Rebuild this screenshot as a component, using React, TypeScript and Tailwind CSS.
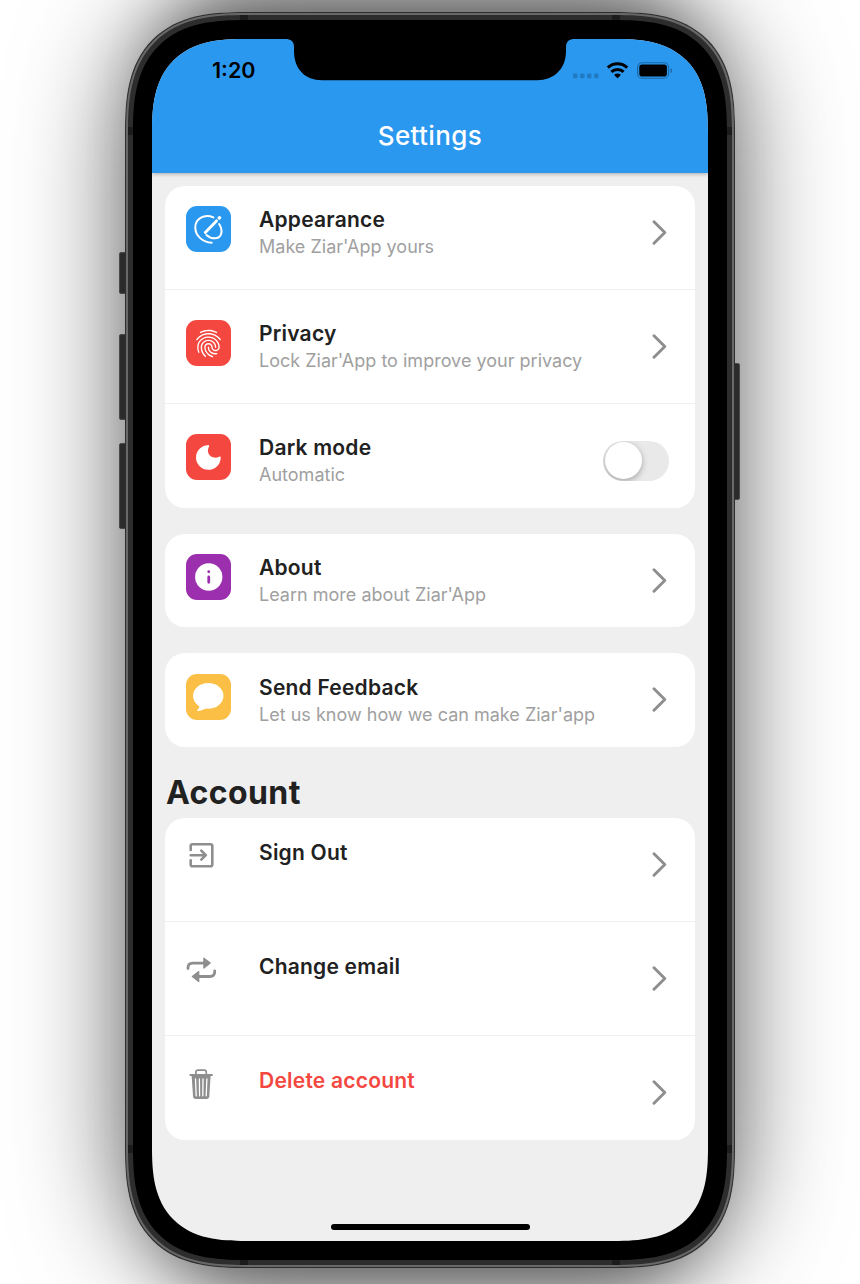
import type { ReactNode } from "react";
import { MdFingerprint } from "react-icons/md";

const squircle = "[corner-shape:superellipse(1.42)]";

function Chevron() {
  return (
    <svg className="h-[25px] w-[15px]" viewBox="0 0 15 25" fill="none" stroke="#8e8e8e" strokeWidth="2.9" strokeLinecap="round" strokeLinejoin="round">
      <path d="M2 1.8 12.800 12.500 2 23.200" />
    </svg>
  );
}

function Tile({ color, children }: { color: string; children: ReactNode }) {
  return <div className={`flex h-[46px] w-[45.5px] items-center justify-center rounded-[11px] text-white ${color}`}>{children}</div>;
}

type RowProps = {
  icon: ReactNode;
  title: string;
  subtitle?: string;
  danger?: boolean;
  trailing?: ReactNode;
  className: string;
};

function Row({ icon, title, subtitle, danger, trailing, className }: RowProps) {
  return (
    <div className={`flex pr-[28.5px] pl-[20.5px] ${className}`}>
      <div className="w-[73.5px]">{icon}</div>
      <div className="flex-1 whitespace-nowrap">
        <div className={`text-[21px] leading-[27px] font-semibold tracking-[0.22px] ${danger ? "text-[#f4473f]" : "text-[#212121]"}`}>{title}</div>
        {subtitle && <div className="text-[18px] leading-[27px] tracking-[0.01px] text-[#a0a0a0]">{subtitle}</div>}
      </div>
      <div className="pt-[13.5px]">{trailing ?? <Chevron />}</div>
    </div>
  );
}

function Card({ children, className = "" }: { children: ReactNode; className?: string }) {
  return <section className={`overflow-hidden rounded-[20px] bg-white ${className}`}>{children}</section>;
}

function Divider() {
  return <div className="h-px bg-[#f0f0f0]" />;
}

function StatusIcons() {
  return (
    <svg className="h-[18px] w-[102px]" viewBox="0 0 102 18">
      <g fill="#217bc2">
        <rect x="1" y="11.6" width="4.6" height="4.6" rx="1.3" />
        <rect x="8" y="11.6" width="4.6" height="4.6" rx="1.3" />
        <rect x="15" y="11.6" width="4.6" height="4.6" rx="1.3" />
        <rect x="22" y="11.6" width="4.6" height="4.6" rx="1.3" />
      </g>
      <g fill="none" stroke="#000" strokeWidth="3.1">
        <path d="M35.800 5.600a14 14 0 0 1 19.400 0" />
        <path d="M39.400 9.900a8.800 8.800 0 0 1 12.200 0" />
      </g>
      <path d="M45.500 16.300 42.100 12.900a4.800 4.800 0 0 1 6.800 0Z" />
      <rect x="65.600" y=".7" width="31" height="15.600" rx="4.500" fill="none" stroke="#1b66a2" strokeWidth="1.100" />
      <rect x="67.300" y="2.500" width="27.600" height="12" rx="2.800" />
      <path d="M98.500 6.200c2 .5 2 4.300 0 4.800Z" fill="#1b66a2" />
    </svg>
  );
}

function SideButton({ className }: { className: string }) {
  return <div className={`absolute w-[8px] rounded-[2px] border border-[#4a4a4a] bg-[#2b2b2b] ${className}`} />;
}

function Antenna({ className }: { className: string }) {
  return <div className={`absolute bg-[#1c1c1c] ${className}`} />;
}

export default function App() {
  return (
    <div className="flex h-[1284px] w-[860px] justify-center overflow-hidden bg-white pt-[12px] font-['Inter',sans-serif]">
      <div className="relative h-[1256px] w-[610px]">
        <div className="absolute inset-0 rounded-[110px] shadow-[0_0_110px_0_rgba(0,0,0,0.62)]" />
        <div className="absolute inset-x-[60px] inset-y-0 rounded-[60px] shadow-[0_0_70px_20px_rgba(0,0,0,0.42)]" />
        <SideButton className="top-[240px] -left-[6px] h-[42px]" />
        <SideButton className="top-[322px] -left-[6px] h-[86px]" />
        <SideButton className="top-[431px] -left-[6px] h-[86px]" />
        <SideButton className="top-[351px] -right-[5px] h-[137px]" />
        <div className={`relative h-full rounded-[121px] border border-[#2e2e2e] bg-[#686868] p-[2px] ${squircle}`}>
          <div className={`relative h-full rounded-[118px] bg-[#2c2d2c] p-[5px] ${squircle}`}>
            <Antenna className="top-0 left-[112px] h-[5px] w-[8px]" />
            <Antenna className="top-0 right-[112px] h-[5px] w-[8px]" />
            <Antenna className="bottom-0 left-[112px] h-[5px] w-[8px]" />
            <Antenna className="right-[112px] bottom-0 h-[5px] w-[8px]" />
            <Antenna className="top-[112px] left-0 h-[8px] w-[5px]" />
            <Antenna className="top-[112px] right-0 h-[8px] w-[5px]" />
            <Antenna className="bottom-[112px] left-0 h-[8px] w-[5px]" />
            <Antenna className="right-0 bottom-[112px] h-[8px] w-[5px]" />
            <div className={`h-full rounded-[113px] bg-black p-[19px] ${squircle}`}>
              <main className={`relative flex h-full flex-col overflow-hidden rounded-[94px] bg-[#efefef] ${squircle}`}>
                <header className="relative z-10 flex h-[133.5px] shrink-0 flex-col bg-[#2b98f0] shadow-[0_1px_4px_rgba(0,0,0,0.3)]">
                  <div className="flex items-start justify-between pt-[17px] pr-[34px] pl-[60px]">
                    <span className="text-[21.5px] leading-[28px] font-semibold text-black">1:20</span>
                    <div className="pt-[5.5px]"><StatusIcons /></div>
                  </div>
                  <h1 className="pt-[34px] text-center text-[26px] leading-[36px] font-medium tracking-[0.4px] text-white">Settings</h1>
                  <svg className="absolute top-0 left-[133px] h-[42px] w-[290px]" viewBox="0 0 290 42">
                    <path d="M0 0C6 0 9 2.500 9 8v4C9 30 20 41.200 37 41.200H252C269 41.200 281 30 281 12V8C281 2.500 284 0 290 0Z" />
                  </svg>
                </header>
                <div className="flex flex-col px-[13px] pt-[13.5px]">
                  <Card>
                    <Row
                      className="h-[103px] pt-[20.4px]"
                      title="Appearance"
                      subtitle="Make Ziar'App yours"
                      icon={
                        <Tile color="bg-[#2b98f0]">
                          <svg className="size-full" viewBox="0 0 46 46" fill="none" stroke="currentColor" strokeWidth="2" strokeLinecap="round">
                            <path d="M27.700 11.300C18.500 7.500 9.400 12.500 9.400 21.500 9.400 30 17 36.500 26 36.800" />
                            <path d="M33.500 18C38 25 36 32.400 29.200 32.400 26 32.400 23.200 31.400 20.600 29" />
                            <path d="M19.500 26.500 30.800 14.800" strokeWidth="2.900" />
                            <path d="m33.600 11.900.3-.3" strokeWidth="3.500" />
                          </svg>
                        </Tile>
                      }
                    />
                    <Divider />
                    <Row className="h-[113px] pt-[30.4px]" title="Privacy" subtitle="Lock Ziar'App to improve your privacy" icon={<Tile color="bg-[#f4473f]"><MdFingerprint size={33} /></Tile>} />
                    <Divider />
                    <Row
                      className="h-[104px] pt-[30.4px]"
                      title="Dark mode"
                      subtitle="Automatic"
                      icon={
                        <Tile color="bg-[#f4473f]">
                          <svg className="size-full" viewBox="0 0 46 46" fill="currentColor">
                            <path d="M22 11c1-.1 1.700.6 1.300 1.500C19.500 19.500 26 26.300 33.600 22.700c1-.4 1.700.3 1.500 1.300A12.500 12.500 0 1 1 22 11Z" />
                          </svg>
                        </Tile>
                      }
                      trailing={
                        <div className="-mt-[7px] -mr-[2.5px] flex h-[40px] w-[66px] items-center overflow-hidden rounded-full bg-[#e9e9e9] px-[1.5px]">
                          <div className="size-[37px] rounded-full bg-white shadow-[0_2px_6px_rgba(0,0,0,0.3)]" />
                        </div>
                      }
                    />
                  </Card>
                  <Card className="mt-[25.5px]">
                    <Row
                      className="h-[93.5px] pt-[20.5px]"
                      title="About"
                      subtitle="Learn more about Ziar'App"
                      icon={
                        <Tile color="bg-[#9b2fae]">
                          <svg className="size-full" viewBox="0 0 46 46">
                            <circle cx="23" cy="23" r="13.800" fill="currentColor" />
                            <path d="M23 23v5.300M23 17.500v.2" stroke="#9b2fae" strokeWidth="2.800" strokeLinecap="round" />
                          </svg>
                        </Tile>
                      }
                    />
                  </Card>
                  <Card className="mt-[26px]">
                    <Row
                      className="h-[93.5px] pt-[20.9px]"
                      title="Send Feedback"
                      subtitle="Let us know how we can make Ziar'app"
                      icon={
                        <Tile color="bg-[#fbbf45]">
                          <svg className="size-full" viewBox="0 0 46 46" fill="currentColor">
                            <ellipse cx="22.500" cy="21.800" rx="15.400" ry="13" />
                            <path d="M13 30.500c1.300 2 .2 3.900-1.600 5.600-.6.700-.3 1.200.6 1.100 3-.3 6-1.500 8.500-3.200Z" />
                          </svg>
                        </Tile>
                      }
                    />
                  </Card>
                  <h2 className="mt-[24.5px] pl-px text-[32px] leading-[44px] font-bold tracking-[0.4px] text-[#212121]">Account</h2>
                  <Card className="mt-[3px]">
                    <Row
                      className="h-[103px] pt-[20.5px]"
                      title="Sign Out"
                      icon={
                        <svg className="-ml-[0.5px] size-[34px]" viewBox="0 0 34 34" fill="none" stroke="#8e8e8e" strokeWidth="2.600" strokeLinecap="round" strokeLinejoin="round">
                          <path d="M5.700 11V7c0-1.200.6-1.800 1.800-1.800h18c1.200 0 1.800.6 1.800 1.800v18.500c0 1.200-.6 1.800-1.800 1.800h-18c-1.200 0-1.800-.6-1.800-1.800v-4.200" />
                          <path d="M5.700 16.200H20.500M16.300 11.700 20.800 16.200 16.300 20.700" />
                        </svg>
                      }
                    />
                    <Divider />
                    <Row
                      className="h-[113px] pt-[30.9px]"
                      title="Change email"
                      icon={
                        <svg className="-ml-[0.5px] size-[34px]" viewBox="0 0 34 34" fill="none" stroke="#8e8e8e" strokeWidth="2.800" strokeLinecap="round" strokeLinejoin="round">
                          <path d="M3 15.500v-.7c0-3 1.700-4.700 4.700-4.700H19M29.700 17.800v1c0 3-1.700 4.700-4.700 4.700H13" />
                          <path d="M18.900 5.200v9.800L25.200 10.100ZM13.700 18.600v9.800L7.400 23.500Z" fill="#8e8e8e" strokeWidth="1.300" />
                        </svg>
                      }
                    />
                    <Divider />
                    <Row
                      className="h-[104px] pt-[30.9px]"
                      title="Delete account"
                      danger
                      icon={
                        <svg className="-ml-[0.5px] size-[34px]" viewBox="0 0 34 34" fill="none" stroke="#8e8e8e" strokeLinecap="round" strokeLinejoin="round">
                          <path d="M5.300 8H27" strokeWidth="1.900" />
                          <path d="M10.900 8V5.300c0-1.500.7-2.200 2.200-2.200h6c1.500 0 2.200.7 2.200 2.200V8" strokeWidth="1.700" />
                          <path d="M6.700 9H25.600L24.300 29.300c-.2 1.800-1.100 2.700-2.800 2.700H10.800C9.100 32 8.200 31.100 8 29.300Z" fill="#8e8e8e" stroke="none" />
                          <path d="m10.500 12 .7 16.800M14.400 12l.2 16.800M18 12l-.2 16.800M21.900 12l-.7 16.800" stroke="#fff" strokeWidth="1.300" />
                        </svg>
                      }
                    />
                  </Card>
                </div>
                <div className="absolute bottom-[11px] left-[179px] h-[6px] w-[199px] rounded-full bg-black" />
              </main>
            </div>
          </div>
        </div>
      </div>
    </div>
  );
}
